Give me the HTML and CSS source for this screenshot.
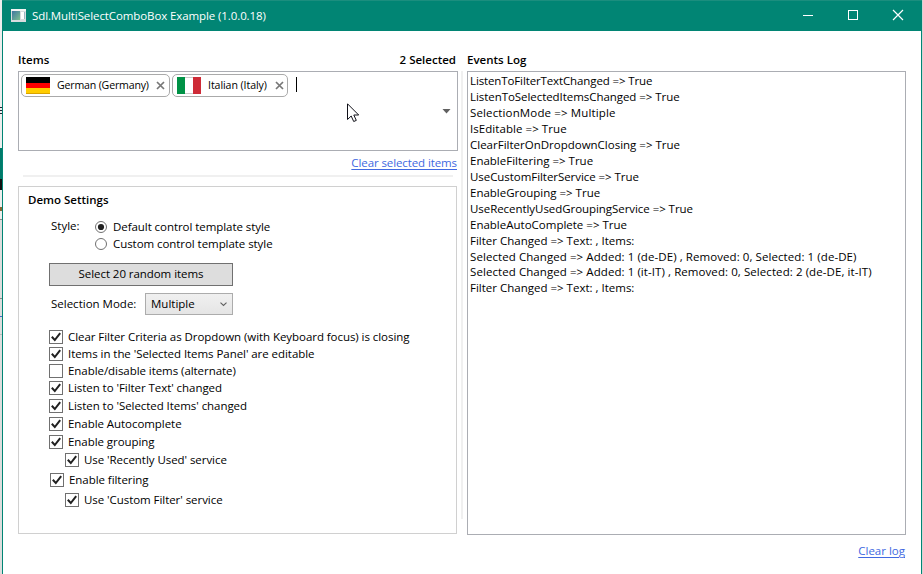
FILE: index.html
```html
<!DOCTYPE html>
<html lang="en">
<head>
<meta charset="utf-8">
<title>Sdl.MultiSelectComboBox Example</title>
<link rel="stylesheet" href="styles.css">
</head>
<body>
<svg width="0" height="0" class="defs" aria-hidden="true">
  <symbol id="check" viewBox="0 0 14 14"><rect x=".5" y=".5" width="13" height="13" fill="#fff" stroke="#707070"/><path d="M2.8 6.8 5.8 10 11.2 3.2" fill="none" stroke="#212121" stroke-width="2"/></symbol>
  <symbol id="empty" viewBox="0 0 14 14"><rect x=".5" y=".5" width="13" height="13" fill="#fff" stroke="#707070"/></symbol>
  <symbol id="cross" viewBox="0 0 9 9"><path d="M1 1 8 8M8 1 1 8" fill="none" stroke="#777" stroke-width="1.7"/></symbol>
</svg>
<div class="desktop">
  <div class="behind"></div>
  <div class="window">
    <header class="titlebar">
      <svg class="appicon" width="15" height="13" viewBox="0 0 15 13"><defs><linearGradient id="ig" x2="1" y2="1"><stop stop-color="#3f76a0"/><stop offset="1" stop-color="#7cc090"/></linearGradient></defs><rect width="15" height="13" fill="#d8dcdf"/><rect y="0" width="15" height="2" fill="#f4f4f4"/><rect x="1" y="2" width="8" height="9" fill="url(#ig)"/><rect x="10" y="3" width="3" height="7" fill="#fff"/><rect x="13" y="3" width="1" height="7" fill="#9fb4c4"/></svg>
      <span class="title">Sdl.MultiSelectComboBox Example (1.0.0.18)</span>
      <div class="controls">
        <svg width="12" height="12"><path d="M1 6.5H11" stroke="#fff"/></svg>
        <svg width="12" height="12"><rect x="1.5" y="1.5" width="9" height="9" fill="none" stroke="#fff"/></svg>
        <svg width="12" height="12"><path d="M1 1 11 11M11 1 1 11" stroke="#fff" stroke-width="1.2"/></svg>
      </div>
    </header>
    <main class="content">
      <section class="left">
        <div class="heading"><b class="h-items">Items</b><b class="h-count">2 Selected</b></div>
        <div class="combo">
          <div class="chip german"><svg width="24" height="17"><rect width="24" height="17" fill="#d9a300"/><rect width="24" height="6" fill="#000"/><rect y="6" width="24" height="5" fill="#f00"/><rect y="11" width="24" height="5" fill="#fc0"/></svg><span>German (Germany)</span><svg class="x" width="9" height="9"><use href="#cross"/></svg></div>
          <div class="chip italian"><svg width="24" height="17"><rect width="24" height="17" fill="#fff"/><rect width="8" height="17" fill="#009246"/><path d="M8 .5H16M8 16.5H16" stroke="#ccc"/><rect x="16" width="8" height="17" fill="#ce2b37"/></svg><span>Italian (Italy)</span><svg class="x" width="9" height="9"><use href="#cross"/></svg></div>
          <i class="caret"></i>
          <svg class="arrow" width="9" height="5"><path d="M.5 0H8.5L4.5 4.5Z" fill="#606060"/></svg>
          <svg class="cursor" width="13" height="20"><path d="M.5 .8V16.5L4.2 13 6.7 18.5 9.3 17.4 6.8 12H11.7Z" fill="#fff" stroke="#101018"/></svg>
        </div>
        <div class="linkrow"><a class="clear-items">Clear selected items</a></div>
        <div class="rule"></div>
        <div class="settings">
          <b class="h-settings">Demo Settings</b>
          <div class="style-row">
            <span class="style-label">Style:</span>
            <div>
              <label class="radio"><svg width="12" height="12"><circle cx="6" cy="6" r="5.5" fill="#fff" stroke="#707070"/><circle cx="6" cy="6" r="3.1" fill="#212121"/></svg><span class="r1">Default control template style</span></label>
              <label class="radio"><svg width="12" height="12"><circle cx="6" cy="6" r="5.5" fill="#fff" stroke="#707070"/></svg><span class="r2">Custom control template style</span></label>
            </div>
          </div>
          <div class="button"><span>Select 20 random items</span></div>
          <div class="mode-row"><span class="mode-label">Selection Mode:</span><div class="select"><span>Multiple</span><svg width="7" height="5"><path d="M.5 .7 3.5 3.5 6.5 .7" fill="none" stroke="#606060" stroke-width="1.1"/></svg></div></div>
          <div class="checks">
            <label class="c1"><svg><use href="#check"/></svg><span>Clear Filter Criteria as Dropdown (with Keyboard focus) is closing</span></label>
            <label class="c2"><svg><use href="#check"/></svg><span>Items in the 'Selected Items Panel' are editable</span></label>
            <label class="c3"><svg><use href="#empty"/></svg><span>Enable/disable items (alternate)</span></label>
            <label class="c4"><svg><use href="#check"/></svg><span>Listen to 'Filter Text' changed</span></label>
            <label class="c5"><svg><use href="#check"/></svg><span>Listen to 'Selected Items' changed</span></label>
            <label class="c6"><svg><use href="#check"/></svg><span>Enable Autocomplete</span></label>
            <label class="c7"><svg><use href="#check"/></svg><span>Enable grouping</span></label>
            <label class="c8 sub"><svg><use href="#check"/></svg><span>Use 'Recently Used' service</span></label>
            <label class="c9"><svg><use href="#check"/></svg><span>Enable filtering</span></label>
            <label class="c10 sub"><svg><use href="#check"/></svg><span>Use 'Custom Filter' service</span></label>
          </div>
        </div>
      </section>
      <div class="splitter"></div>
      <section class="right">
        <div class="heading"><b class="h-log">Events Log</b></div>
        <div class="log">
          <p class="l1">ListenToFilterTextChanged =&gt; True</p>
          <p class="l2">ListenToSelectedItemsChanged =&gt; True</p>
          <p class="l3">SelectionMode =&gt; Multiple</p>
          <p class="l4">IsEditable =&gt; True</p>
          <p class="l5">ClearFilterOnDropdownClosing =&gt; True</p>
          <p class="l6">EnableFiltering =&gt; True</p>
          <p class="l7">UseCustomFilterService =&gt; True</p>
          <p class="l8">EnableGrouping =&gt; True</p>
          <p class="l9">UseRecentlyUsedGroupingService =&gt; True</p>
          <p class="l10">EnableAutoComplete =&gt; True</p>
          <p class="l11">Filter Changed =&gt; Text: , Items:</p>
          <p class="l12">Selected Changed =&gt; Added: 1 (de-DE) , Removed: 0, Selected: 1 (de-DE)</p>
          <p class="l13">Selected Changed =&gt; Added: 1 (it-IT) , Removed: 0, Selected: 2 (de-DE, it-IT)</p>
          <p class="l14">Filter Changed =&gt; Text: , Items:</p>
        </div>
        <div class="linkrow log-link"><a class="clear-log">Clear log</a></div>
      </section>
    </main>
  </div>
</div>
</body>
</html>
```

FILE: styles.css
```css
* { box-sizing: border-box; }
body { margin: 0; overflow: hidden; font: 11.5px/16px "Open Sans", "Noto Sans", sans-serif; color: #000; }
.defs { position: absolute; }
svg { display: block; flex: none; }
b { font-weight: 600; }
p { margin: 0; }
span, a, b, p { white-space: nowrap; }
.desktop { width: 923px; height: 574px; display: flex; background: #d4d4d4; }
.behind { width: 2px; background: linear-gradient(#eee 0 107px, #223 107px 108px, #eee 108px 110px, #223 110px 111px, #eee 111px 113px, #223 113px 114px, #eee 114px 148px, #007a6a 148px 179px, #111 179px 190px, #eee 190px 207px, #863 207px 211px, #eee 211px 219px, #888 219px 220px, #ddd 220px 298px, #888 298px 299px, #ddd 299px 316px, #46c 316px 317px, #ddd 317px 334px, #bbb 334px 335px, #ddd 335px); }
.window { width: 920px; background: #fff; border: solid #018574; border-width: 0 1px; }
.titlebar { height: 31px; margin: 0 -1px; padding: 0 18px 2px 9px; background: #018574; border-top: 1px solid #1b8e7e; color: #fff; display: flex; align-items: center; }
.title { margin: 2px 0 0 6px; letter-spacing: -.1px; }
.controls { margin-left: auto; display: flex; gap: 33px; }
.content { display: flex; padding: 21px 0 0 15px; }
.left { width: 440px; }
.heading { height: 19px; display: flex; justify-content: space-between; }
.heading b { line-height: 15px; }
.h-count { margin-right: 2px; }
.combo { position: relative; height: 80px; border: 1px solid #abadb3; padding: 2px; display: flex; align-items: flex-start; }
.chip { height: 23px; border: 1px solid #aaa; border-radius: 5px; display: flex; align-items: center; padding: 0 4px; font-size: 10.6px; }
.chip span { margin: -1px 0 0 7px; letter-spacing: -.07px; }
.chip.german span { letter-spacing: -.18px; }
.chip .x { margin-left: auto; }
.german { width: 149px; }
.italian { width: 116px; margin-left: 2px; }
.italian .x { margin-right: -1px; }
.caret { width: 1px; height: 15px; background: #000; margin: 3px 0 0 8px; }
.arrow { position: absolute; left: 423px; top: 37px; }
.cursor { position: absolute; left: 328px; top: 31px; }
.linkrow { height: 24px; padding: 4px 1px 0 0; text-align: right; }
a { color: #4169e1; text-decoration: underline; text-underline-offset: 2px; }
.clear-items { letter-spacing: -.1px; }
.rule { height: 2px; margin: 0 5px; background: #f0f0f0; }
.settings { width: 439px; height: 348px; margin-top: 9px; border: 1px solid #d0d0d0; padding: 5px 0 0 9px; }
.settings > b { display: block; height: 17px; }
.style-row { display: flex; margin: 9px 0 0 23px; }
.style-label { width: 44px; }
.radio { display: flex; align-items: center; height: 17px; gap: 6px; letter-spacing: -.06px; }
.button { width: 184px; height: 23px; margin: 11px 0 0 21px; border: 1px solid #707070; background: #ddd; text-align: center; line-height: 20px; letter-spacing: -.06px; }
.mode-row { display: flex; align-items: center; margin: 7px 0 0 23px; }
.mode-label { width: 94px; }
.select { width: 88px; height: 22px; padding: 0 5px; border: 1px solid #acacac; background: linear-gradient(#f0f0f0, #e5e5e5); display: flex; align-items: center; justify-content: space-between; }
.checks { margin: 14px 0 0 21px; letter-spacing: -.055px; }
.checks label { display: flex; align-items: center; height: 16px; gap: 5px; margin-bottom: 1px; }
.checks svg { width: 14px; height: 14px; }
.checks .c4, .checks .c5, .checks .c6, .checks .c7 { margin-bottom: 2px; }
.checks .c8, .checks .c9 { margin-bottom: 4px; }
.checks .c9 { margin-left: 1px; }
.checks .sub { margin-left: 16px; }
.splitter { width: 2px; height: 448px; margin: 19px 4px 0 3px; background: #f0f0f0; }
.right { width: 439px; }
.log { height: 464px; border: 1px solid #abadb3; padding: 1px 2px; }
.log .l1 { letter-spacing: -.12px; }
.log .l2, .log .l7, .log .l9 { letter-spacing: -.055px; }
.log .l3 { letter-spacing: .14px; }
.log .l4 { letter-spacing: .06px; }
.log .l12, .log .l13 { letter-spacing: .075px; }
.log .l13 { margin-top: -1px; }
.log-link { padding: 8px 1px 0 0; }
```
